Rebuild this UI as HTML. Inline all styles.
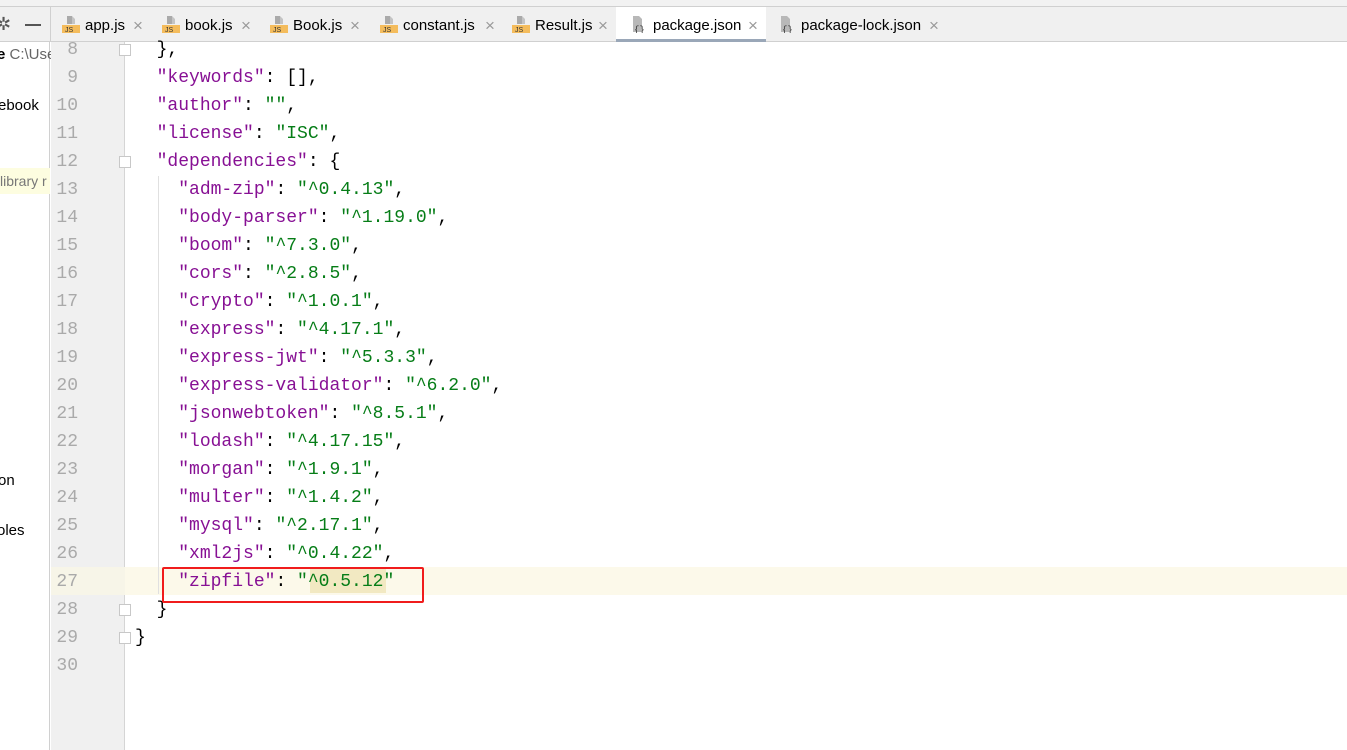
<!DOCTYPE html>
<html><head><meta charset="utf-8"><style>
*{margin:0;padding:0;box-sizing:border-box}
body{width:1347px;height:750px;overflow:hidden;background:#fff;position:relative;font-family:"Liberation Sans",sans-serif}
.abs{position:absolute}
.top{left:0;top:0;width:1347px;height:7px;background:#f2f2f2;border-bottom:1px solid #d0d0d0}
.tabs{left:0;top:7px;width:1347px;height:35px;background:#f0f0f0;border-bottom:1px solid #d0d0d0}
.tab{position:absolute;top:9px;height:34px;font-size:15px;color:#000;line-height:34px}
.ico{position:absolute;top:15px;width:18px;height:18px}
.ln{position:absolute;font:18px "Liberation Mono",monospace;color:#aaa;height:28px;line-height:28px}
.code{position:absolute;left:135px;font:18px "Liberation Mono",monospace;height:28px;line-height:28px;white-space:pre;color:#000;z-index:2}
.k{color:#871094}.s{color:#067d17}
.fold{position:absolute;left:119px;width:12px;height:12px;border:1px solid #c8c8c8;background:#fff}
</style></head><body>
<div class="abs top"></div>
<div class="abs tabs"></div>
<div class="abs" style="left:0;top:42px;width:50px;height:708px;background:#fff;border-right:1px solid #d0d0d0"></div>
<div class="abs" style="left:50px;top:7px;width:1px;height:35px;background:#d0d0d0"></div>
<div class="abs" style="left:-4px;top:14px;font-size:18px;color:#555">✲</div>
<div class="abs" style="left:25px;top:24px;width:16px;height:2px;background:#555"></div>
<div class="abs" style="left:-3px;top:46px;font-size:15px"><b>e</b> <span style="color:#666">C:\Use</span></div>
<div class="abs" style="left:-2px;top:97px;font-size:15px">ebook</div>
<div class="abs" style="left:0;top:168px;width:50px;height:26px;background:#fdfde0;font-size:14px;color:#777;line-height:26px;overflow:hidden;white-space:nowrap">library r</div>
<div class="abs" style="left:-2px;top:472px;font-size:15px">on</div>
<div class="abs" style="left:-3px;top:522px;font-size:15px">oles</div>
<div class="abs" style="left:51px;top:42px;width:74px;height:708px;background:#f0f0f0;border-right:1px solid #d5d5d5"></div>
<div class="abs" style="left:51px;top:567px;width:1296px;height:28px;background:#fcf9ea"></div>
<div class="abs" style="left:51px;top:567px;width:74px;height:28px;background:#f7f5e8"></div>
<div class="abs" style="left:158px;top:176px;width:1px;height:418px;background:#e0e0e0"></div>
<div class="abs" style="left:616px;top:7px;width:150px;height:35px;background:#fff;border-bottom:3px solid #9aa7b8"></div>
<div id="t"></div>
<div class="abs" style="left:310px;top:569px;width:76px;height:24px;background:#f2e9c2;z-index:1"></div>
<div id="c"></div>
<div class="abs" style="left:162px;top:567px;width:262px;height:36px;border:2px solid #f01c1c;border-radius:2px;z-index:3"></div>
<script>
var tabs=[["app.js",62,133,1],["book.js",162,241,1],["Book.js",270,350,1],["constant.js",380,485,1],["Result.js",512,598,1],["package.json",630,748,0],["package-lock.json",778,929,0]];
var h="";
tabs.forEach(function(t){
 var ic=t[3]?'<svg class="ico" style="left:'+t[1]+'px" viewBox="0 0 18 18"><path d="M5 1h5v8H5z" fill="#aaa"/><path d="M10 1l3 3v5h-3z" fill="#c4c4c4"/><rect x="0" y="10" width="18" height="8" fill="#f4bc5c"/><text x="3" y="17" font-size="7" font-family="Liberation Sans" fill="#333">JS</text></svg>'
 :'<svg class="ico" style="left:'+t[1]+'px" viewBox="0 0 18 18"><path d="M3 1h6l3 3v13H3z" fill="#b8b8b8"/><text x="4" y="17" font-size="9" font-family="Liberation Mono" fill="#333">{}</text></svg>';
 h+=ic+'<div class="tab" style="left:'+(t[1]+23)+'px">'+t[0]+'</div><div class="tab" style="left:'+t[2]+'px;color:#999;font-size:17px">×</div>';
});
document.getElementById("t").innerHTML=h;
var L=["  },",'  <k>"keywords"</k>: [],','  <k>"author"</k>: <s>""</s>,','  <k>"license"</k>: <s>"ISC"</s>,','  <k>"dependencies"</k>: {'];
var d=[["adm-zip","^0.4.13"],["body-parser","^1.19.0"],["boom","^7.3.0"],["cors","^2.8.5"],["crypto","^1.0.1"],["express","^4.17.1"],["express-jwt","^5.3.3"],["express-validator","^6.2.0"],["jsonwebtoken","^8.5.1"],["lodash","^4.17.15"],["morgan","^1.9.1"],["multer","^1.4.2"],["mysql","^2.17.1"],["xml2js","^0.4.22"],["zipfile","^0.5.12"]];
d.forEach(function(x,i){L.push('    <k>"'+x[0]+'"</k>: <s>"'+x[1]+'"</s>'+(i<d.length-1?',':''))});
L.push("  }");L.push("}");L.push("");
var c="";
L.forEach(function(l,i){var y=36+i*28;
 l=l.replace(/<k>/g,'<span class="k">').replace(/<\/k>/g,'</span>').replace(/<s>/g,'<span class="s">').replace(/<\/s>/g,'</span>');
 c+='<div class="ln" style="top:'+y+'px;left:51px;width:27px;text-align:right">'+(i+8)+'</div><div class="code" style="top:'+y+'px">'+l+'</div>';});
[0,4,20,21].forEach(function(i){c+='<div class="fold" style="top:'+(44+i*28)+'px"></div>'});
document.getElementById("c").innerHTML=c;
</script>
</body></html>
